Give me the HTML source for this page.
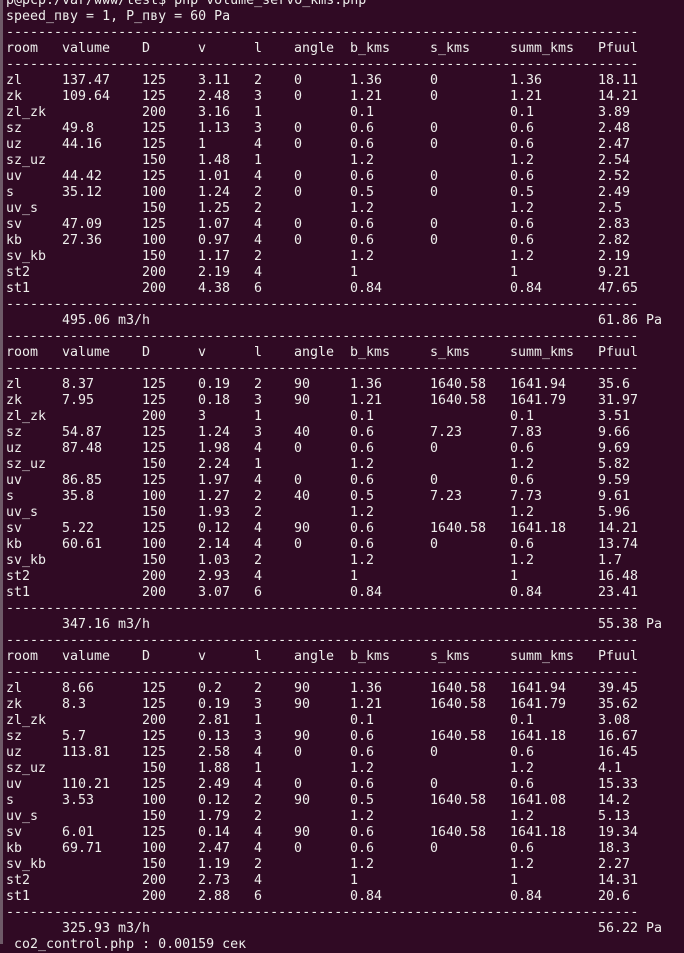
<!DOCTYPE html>
<html><head><meta charset="utf-8"><style>
html,body{margin:0;padding:0}
body{width:684px;height:944px;overflow:hidden;background:#300a24;position:relative;color:#eeeeec;font-family:"DejaVu Sans Mono","Liberation Mono",monospace;font-size:13.3px;line-height:16px}
.strip{position:absolute;left:0;top:0;width:3px;height:944px;background:#6e5a68}
.c{position:absolute;left:6px;top:-7px;width:680px}
.l{height:16px;white-space:pre;overflow:hidden}
.r{display:grid;grid-template-columns:56px 80px 56px 56px 40px 56px 80px 80px 88px auto;height:16px}
.r span{white-space:pre}
</style></head><body><div class="strip"></div><div class="c">
<div class="l">p@pcp:/var/www/test$ php volume_servo_kms.php</div>
<div class="l">speed_пву = 1, P_пву = 60 Pa</div>
<div class="l">-------------------------------------------------------------------------------</div>
<div class="r"><span>room</span><span>valume</span><span>D</span><span>v</span><span>l</span><span>angle</span><span>b_kms</span><span>s_kms</span><span>summ_kms</span><span>Pfuul</span></div>
<div class="l">-------------------------------------------------------------------------------</div>
<div class="r"><span>zl</span><span>137.47</span><span>125</span><span>3.11</span><span>2</span><span>0</span><span>1.36</span><span>0</span><span>1.36</span><span>18.11</span></div>
<div class="r"><span>zk</span><span>109.64</span><span>125</span><span>2.48</span><span>3</span><span>0</span><span>1.21</span><span>0</span><span>1.21</span><span>14.21</span></div>
<div class="r"><span>zl_zk</span><span></span><span>200</span><span>3.16</span><span>1</span><span></span><span>0.1</span><span></span><span>0.1</span><span>3.89</span></div>
<div class="r"><span>sz</span><span>49.8</span><span>125</span><span>1.13</span><span>3</span><span>0</span><span>0.6</span><span>0</span><span>0.6</span><span>2.48</span></div>
<div class="r"><span>uz</span><span>44.16</span><span>125</span><span>1</span><span>4</span><span>0</span><span>0.6</span><span>0</span><span>0.6</span><span>2.47</span></div>
<div class="r"><span>sz_uz</span><span></span><span>150</span><span>1.48</span><span>1</span><span></span><span>1.2</span><span></span><span>1.2</span><span>2.54</span></div>
<div class="r"><span>uv</span><span>44.42</span><span>125</span><span>1.01</span><span>4</span><span>0</span><span>0.6</span><span>0</span><span>0.6</span><span>2.52</span></div>
<div class="r"><span>s</span><span>35.12</span><span>100</span><span>1.24</span><span>2</span><span>0</span><span>0.5</span><span>0</span><span>0.5</span><span>2.49</span></div>
<div class="r"><span>uv_s</span><span></span><span>150</span><span>1.25</span><span>2</span><span></span><span>1.2</span><span></span><span>1.2</span><span>2.5</span></div>
<div class="r"><span>sv</span><span>47.09</span><span>125</span><span>1.07</span><span>4</span><span>0</span><span>0.6</span><span>0</span><span>0.6</span><span>2.83</span></div>
<div class="r"><span>kb</span><span>27.36</span><span>100</span><span>0.97</span><span>4</span><span>0</span><span>0.6</span><span>0</span><span>0.6</span><span>2.82</span></div>
<div class="r"><span>sv_kb</span><span></span><span>150</span><span>1.17</span><span>2</span><span></span><span>1.2</span><span></span><span>1.2</span><span>2.19</span></div>
<div class="r"><span>st2</span><span></span><span>200</span><span>2.19</span><span>4</span><span></span><span>1</span><span></span><span>1</span><span>9.21</span></div>
<div class="r"><span>st1</span><span></span><span>200</span><span>4.38</span><span>6</span><span></span><span>0.84</span><span></span><span>0.84</span><span>47.65</span></div>
<div class="l">-------------------------------------------------------------------------------</div>
<div class="r"><span></span><span>495.06 m3/h</span><span></span><span></span><span></span><span></span><span></span><span></span><span></span><span>61.86 Pa</span></div>
<div class="l">-------------------------------------------------------------------------------</div>
<div class="r"><span>room</span><span>valume</span><span>D</span><span>v</span><span>l</span><span>angle</span><span>b_kms</span><span>s_kms</span><span>summ_kms</span><span>Pfuul</span></div>
<div class="l">-------------------------------------------------------------------------------</div>
<div class="r"><span>zl</span><span>8.37</span><span>125</span><span>0.19</span><span>2</span><span>90</span><span>1.36</span><span>1640.58</span><span>1641.94</span><span>35.6</span></div>
<div class="r"><span>zk</span><span>7.95</span><span>125</span><span>0.18</span><span>3</span><span>90</span><span>1.21</span><span>1640.58</span><span>1641.79</span><span>31.97</span></div>
<div class="r"><span>zl_zk</span><span></span><span>200</span><span>3</span><span>1</span><span></span><span>0.1</span><span></span><span>0.1</span><span>3.51</span></div>
<div class="r"><span>sz</span><span>54.87</span><span>125</span><span>1.24</span><span>3</span><span>40</span><span>0.6</span><span>7.23</span><span>7.83</span><span>9.66</span></div>
<div class="r"><span>uz</span><span>87.48</span><span>125</span><span>1.98</span><span>4</span><span>0</span><span>0.6</span><span>0</span><span>0.6</span><span>9.69</span></div>
<div class="r"><span>sz_uz</span><span></span><span>150</span><span>2.24</span><span>1</span><span></span><span>1.2</span><span></span><span>1.2</span><span>5.82</span></div>
<div class="r"><span>uv</span><span>86.85</span><span>125</span><span>1.97</span><span>4</span><span>0</span><span>0.6</span><span>0</span><span>0.6</span><span>9.59</span></div>
<div class="r"><span>s</span><span>35.8</span><span>100</span><span>1.27</span><span>2</span><span>40</span><span>0.5</span><span>7.23</span><span>7.73</span><span>9.61</span></div>
<div class="r"><span>uv_s</span><span></span><span>150</span><span>1.93</span><span>2</span><span></span><span>1.2</span><span></span><span>1.2</span><span>5.96</span></div>
<div class="r"><span>sv</span><span>5.22</span><span>125</span><span>0.12</span><span>4</span><span>90</span><span>0.6</span><span>1640.58</span><span>1641.18</span><span>14.21</span></div>
<div class="r"><span>kb</span><span>60.61</span><span>100</span><span>2.14</span><span>4</span><span>0</span><span>0.6</span><span>0</span><span>0.6</span><span>13.74</span></div>
<div class="r"><span>sv_kb</span><span></span><span>150</span><span>1.03</span><span>2</span><span></span><span>1.2</span><span></span><span>1.2</span><span>1.7</span></div>
<div class="r"><span>st2</span><span></span><span>200</span><span>2.93</span><span>4</span><span></span><span>1</span><span></span><span>1</span><span>16.48</span></div>
<div class="r"><span>st1</span><span></span><span>200</span><span>3.07</span><span>6</span><span></span><span>0.84</span><span></span><span>0.84</span><span>23.41</span></div>
<div class="l">-------------------------------------------------------------------------------</div>
<div class="r"><span></span><span>347.16 m3/h</span><span></span><span></span><span></span><span></span><span></span><span></span><span></span><span>55.38 Pa</span></div>
<div class="l">-------------------------------------------------------------------------------</div>
<div class="r"><span>room</span><span>valume</span><span>D</span><span>v</span><span>l</span><span>angle</span><span>b_kms</span><span>s_kms</span><span>summ_kms</span><span>Pfuul</span></div>
<div class="l">-------------------------------------------------------------------------------</div>
<div class="r"><span>zl</span><span>8.66</span><span>125</span><span>0.2</span><span>2</span><span>90</span><span>1.36</span><span>1640.58</span><span>1641.94</span><span>39.45</span></div>
<div class="r"><span>zk</span><span>8.3</span><span>125</span><span>0.19</span><span>3</span><span>90</span><span>1.21</span><span>1640.58</span><span>1641.79</span><span>35.62</span></div>
<div class="r"><span>zl_zk</span><span></span><span>200</span><span>2.81</span><span>1</span><span></span><span>0.1</span><span></span><span>0.1</span><span>3.08</span></div>
<div class="r"><span>sz</span><span>5.7</span><span>125</span><span>0.13</span><span>3</span><span>90</span><span>0.6</span><span>1640.58</span><span>1641.18</span><span>16.67</span></div>
<div class="r"><span>uz</span><span>113.81</span><span>125</span><span>2.58</span><span>4</span><span>0</span><span>0.6</span><span>0</span><span>0.6</span><span>16.45</span></div>
<div class="r"><span>sz_uz</span><span></span><span>150</span><span>1.88</span><span>1</span><span></span><span>1.2</span><span></span><span>1.2</span><span>4.1</span></div>
<div class="r"><span>uv</span><span>110.21</span><span>125</span><span>2.49</span><span>4</span><span>0</span><span>0.6</span><span>0</span><span>0.6</span><span>15.33</span></div>
<div class="r"><span>s</span><span>3.53</span><span>100</span><span>0.12</span><span>2</span><span>90</span><span>0.5</span><span>1640.58</span><span>1641.08</span><span>14.2</span></div>
<div class="r"><span>uv_s</span><span></span><span>150</span><span>1.79</span><span>2</span><span></span><span>1.2</span><span></span><span>1.2</span><span>5.13</span></div>
<div class="r"><span>sv</span><span>6.01</span><span>125</span><span>0.14</span><span>4</span><span>90</span><span>0.6</span><span>1640.58</span><span>1641.18</span><span>19.34</span></div>
<div class="r"><span>kb</span><span>69.71</span><span>100</span><span>2.47</span><span>4</span><span>0</span><span>0.6</span><span>0</span><span>0.6</span><span>18.3</span></div>
<div class="r"><span>sv_kb</span><span></span><span>150</span><span>1.19</span><span>2</span><span></span><span>1.2</span><span></span><span>1.2</span><span>2.27</span></div>
<div class="r"><span>st2</span><span></span><span>200</span><span>2.73</span><span>4</span><span></span><span>1</span><span></span><span>1</span><span>14.31</span></div>
<div class="r"><span>st1</span><span></span><span>200</span><span>2.88</span><span>6</span><span></span><span>0.84</span><span></span><span>0.84</span><span>20.6</span></div>
<div class="l">-------------------------------------------------------------------------------</div>
<div class="r"><span></span><span>325.93 m3/h</span><span></span><span></span><span></span><span></span><span></span><span></span><span></span><span>56.22 Pa</span></div>
<div class="l"> co2_control.php : 0.00159 сек</div>
</div></body></html>
